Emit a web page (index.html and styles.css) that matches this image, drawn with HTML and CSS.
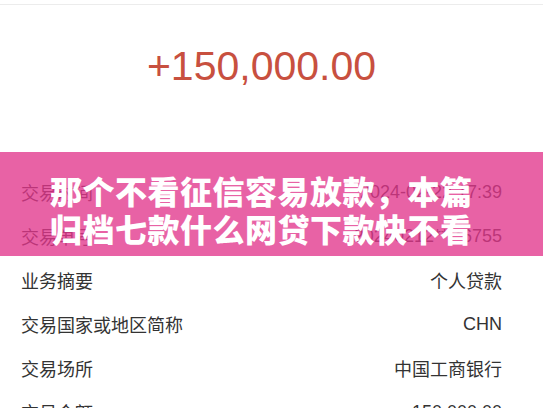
FILE: index.html
```html
<!DOCTYPE html>
<html lang="zh-CN">
<head>
    <meta charset="UTF-8">
    <title>交易详情</title>
    <link rel="stylesheet" href="styles.css">
</head>
<body>

<div class="topbar"></div>

<div class="amount">+150,000.00</div>

<div class="rows">
    <div class="row"><span class="label">交易时间</span><span class="value">2024-02-22 17:39</span></div>
    <div class="row"><span class="label">交易单号</span><span class="value">20240212****6755</span></div>
    <div class="row"><span class="label">业务摘要</span><span class="value">个人贷款</span></div>
    <div class="row"><span class="label">交易国家或地区简称</span><span class="value">CHN</span></div>
    <div class="row"><span class="label">交易场所</span><span class="value">中国工商银行</span></div>
    <div class="row"><span class="label">交易金额</span><span class="value">150,000.00</span></div>
</div>

<!-- title banner laid over the list -->
<div class="banner">
    <h1 class="banner-title">那个不看征信容易放款，本篇归档七款什么网贷下款快不看</h1>
</div>

</body>
</html>
```

FILE: styles.css
```css
body {
    margin: 0;
    background-color: #ffffff;
    font-family: "Liberation Sans", "Noto Sans CJK SC", sans-serif;
    color: #333333;
    overflow: hidden;
    position: relative;
    height: 408px;
}
.topbar {
    height: 4px;
    border-bottom: 1px solid #ececec;
}
.amount {
    padding: 37px 20px 80px 0;
    text-align: center;
    font-size: 41px;
    line-height: 48px;
    color: #c8503f;
}
.rows {
    display: flex;
    flex-direction: column;
}
.row {
    height: 44px;
    display: flex;
    align-items: center;
    justify-content: space-between;
    padding: 0 41px 0 21px;
    font-size: 18px;
}
.label {
    color: #333333;
}
.value {
    color: #333333;
}
.banner {
    position: absolute;
    top: 152px;
    left: 0;
    right: 0;
    height: 104px;
    background-color: rgba(225, 54, 140, 0.78);
    padding: 19px 0 0 50px;
    box-sizing: border-box;
}
.banner-title {
    margin: 0;
    width: 430px;
    font-family: "Noto Sans CJK SC", sans-serif;
    font-weight: 900;
    font-size: 32px;
    line-height: 38px;
    letter-spacing: 0.5px;
    color: #ffffff;
}
```
